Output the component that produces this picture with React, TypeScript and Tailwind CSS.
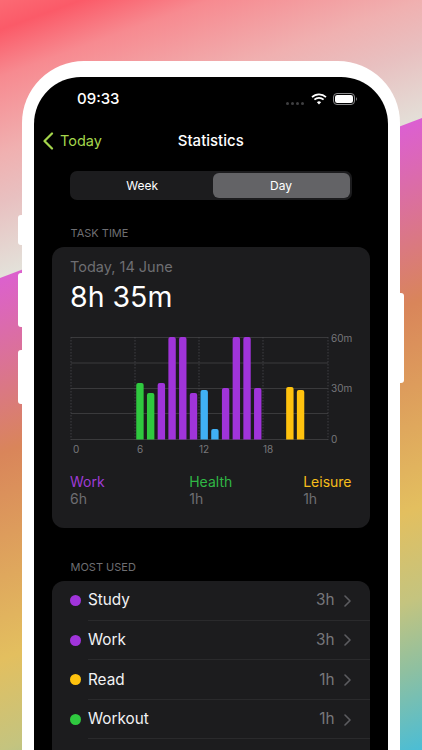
const bars: { hour: number; top: number; color: string }[] = [
  { hour: 6, top: 46, color: "#2fc93f" },
  { hour: 7, top: 56, color: "#2fc93f" },
  { hour: 8, top: 46, color: "#a034da" },
  { hour: 9, top: 0, color: "#a034da" },
  { hour: 10, top: 0, color: "#a034da" },
  { hour: 11, top: 56, color: "#a034da" },
  { hour: 12, top: 53, color: "#40b0f5" },
  { hour: 13, top: 92, color: "#40b0f5" },
  { hour: 14, top: 51, color: "#a034da" },
  { hour: 15, top: 0, color: "#a034da" },
  { hour: 16, top: 0, color: "#a034da" },
  { hour: 17, top: 51, color: "#a034da" },
  { hour: 20, top: 50, color: "#ffc20e" },
  { hour: 21, top: 53, color: "#ffc20e" },
];

const rows = [
  { name: "Study", value: "3h", dot: "bg-[#a034da]" },
  { name: "Work", value: "3h", dot: "bg-[#a034da]" },
  { name: "Read", value: "1h", dot: "bg-[#ffc20e]" },
  { name: "Workout", value: "1h", dot: "bg-[#2fc93f]" },
];

function StatusIcons() {
  return (
    <div className="flex items-center">
      <div className="flex gap-[2px] mt-[8px] mr-[7px]">
        {[0, 1, 2, 3].map((i) => (
          <span key={i} className="w-[3px] h-[3px] rounded-full bg-[#3f3f41]" />
        ))}
      </div>
      <svg width="16" height="12" viewBox="0 0 16 12" className="mr-[6px]" fill="none" stroke="#fff" strokeWidth="1.7">
        <path d="M1 4.2a10 10 0 0 1 14 0" />
        <path d="M3.4 6.7a6.6 6.6 0 0 1 9.2 0" />
        <path d="M8 11.6 5.9 9.3a3 3 0 0 1 4.2 0Z" fill="#fff" stroke="none" />
      </svg>
      <svg width="24" height="12" viewBox="0 0 24 12" fill="none">
        <rect x="0.5" y="0.5" width="21" height="11" rx="3.5" stroke="#8a8a8c" />
        <rect x="2" y="2" width="18" height="8" rx="2.2" fill="#fff" />
        <path d="M23 4.2c.7.3 1 1 1 1.8s-.3 1.500-1 1.800Z" fill="#77777a" />
      </svg>
    </div>
  );
}

function Chart() {
  const step = 257 / 24;
  return (
    <svg width="300" height="128" viewBox="0 0 300 128" className="block overflow-visible font-['Inter',sans-serif]">
      {[0, 25.5, 51, 76, 102].map((y) => (
        <line key={y} x1="0" x2="257" y1={y + 0.5} y2={y + 0.5} stroke="#3a3a3c" strokeWidth="1" />
      ))}
      {[0, 64, 128, 192, 257].map((x) => (
        <line key={x} x1={x} x2={x} y1="0" y2="103" stroke="#4a4a4d" strokeWidth="0.8" strokeDasharray="1.5 1.5" />
      ))}
      {bars.map((b) => (
        <path
          key={b.hour}
          d={`M${b.hour * step + 1} 102.5V${b.top + 2}a2 2 0 0 1 2-2h3.4a2 2 0 0 1 2 2V102.5Z`}
          fill={b.color}
        />
      ))}
      <g fontSize="10" fill="#77777b">
        <text x="260" y="4.5">60m</text>
        <text x="260" y="55">30m</text>
        <text x="260" y="105.5">0</text>
        <text x="2" y="116">0</text>
        <text x="66" y="116">6</text>
        <text x="128" y="116">12</text>
        <text x="192" y="116">18</text>
      </g>
    </svg>
  );
}

export default function App() {
  return (
    <div className="relative w-[422px] h-[750px] overflow-hidden font-['Inter',sans-serif] bg-[linear-gradient(160deg,#dc5fd2_255px,#d9855a_426px,#e3bf5f_620px,#c4c47f_705px,#8fc0a0_770px,#4bbdd5_849px)]">
      {/* top wash, cut along the diagonal */}
      <div className="absolute inset-0 [clip-path:polygon(0_0,100%_0,100%_118px,0_278px)] bg-[linear-gradient(160deg,#fb6a74_0px,#fb5a68_28px,#f78a90_72px,#f0b0b0_144px,#e8c0c0_190px,#e3e2da_262px)]" />

      {/* side buttons */}
      <div className="absolute left-[18px] top-[215px] w-[6px] h-[30px] rounded-l-[3px] bg-white" />
      <div className="absolute left-[18px] top-[273px] w-[6px] h-[54px] rounded-l-[3px] bg-white" />
      <div className="absolute left-[18px] top-[350px] w-[6px] h-[54px] rounded-l-[3px] bg-white" />
      <div className="absolute left-[398px] top-[293px] w-[6px] h-[90px] rounded-r-[3px] bg-white" />

      <div className="relative ml-[22px] mt-[61px] w-[377.5px] h-[689px] flex flex-col bg-white rounded-t-[62px] px-[12px] pt-[16px]">
        <div className="flex-1 flex flex-col min-h-0 bg-black rounded-t-[47px]">
          <div className="h-[44px] shrink-0 flex items-center justify-between pl-[43px] pr-[31px]">
            <span className="mt-[1px] text-[15px] font-medium text-white">09:33</span>
            <StatusIcons />
          </div>

          <div className="relative h-[40px] shrink-0 flex items-center justify-center pt-[1px]">
            <div className="absolute left-[8px] top-[11px] flex items-center text-[#a5d64c]">
              <svg width="12" height="18" viewBox="0 0 12 18" fill="none" stroke="currentColor" strokeWidth="2.2" strokeLinecap="round" strokeLinejoin="round">
                <path d="M10 1.5 2.5 9l7.5 7.5" />
              </svg>
              <span className="ml-[6px] text-[14.5px] leading-[18px]">Today</span>
            </div>
            <span className="text-[15px] font-medium text-white">Statistics</span>
          </div>

          <div className="shrink-0 mt-[10px] mx-[36px] h-[29px] flex p-[2px] bg-[#1c1c1e] rounded-[7px] text-[12px] text-white">
            <div className="flex-1 flex items-center justify-center">Week</div>
            <div className="w-[137px] flex items-center justify-center bg-[#636366] rounded-[6px]">Day</div>
          </div>

          <div className="shrink-0 mt-[26px] ml-[36.5px] h-[14px] flex items-center text-[11px] text-[#6e6e72]">TASK TIME</div>

          <section className="shrink-0 mt-[7px] mx-[18px] h-[281px] bg-[#1c1c1e] rounded-[12px] pt-[11px] px-[18px]">
            <div className="text-[14.5px] leading-[18px] text-[#6e6e72]">Today, 14 June</div>
            <div className="mt-[4px] text-[28.5px] leading-[34px] text-white">8h 35m</div>
            <div className="mt-[23px] ml-[1px]">
              <Chart />
            </div>
            <div className="mt-[8px] grid grid-cols-3 text-[14px] leading-[17px]">
              <div>
                <div className="text-[#9f3bd6]">Work</div>
                <div className="text-[#6e6e72]">6h</div>
              </div>
              <div className="justify-self-center">
                <div className="text-[#30b845]">Health</div>
                <div className="text-[#6e6e72]">1h</div>
              </div>
              <div className="justify-self-end">
                <div className="text-[#f5bd1b]">Leisure</div>
                <div className="text-[#6e6e72]">1h</div>
              </div>
            </div>
          </section>

          <div className="shrink-0 mt-[32px] ml-[36.5px] h-[14px] flex items-center text-[11px] text-[#6e6e72]">MOST USED</div>

          <section className="flex-1 mt-[7px] mx-[18px] bg-[#1c1c1e] rounded-t-[12px]">
            {rows.map((r) => (
              <div key={r.name} className="h-[39.6px] flex items-center pl-[18px]">
                <span className={`w-[11px] h-[11px] rounded-full shrink-0 ${r.dot}`} />
                <div className="ml-[7px] flex-1 self-stretch flex items-center border-b border-[#2a2a2c] pt-[1px] pr-[19px]">
                  <span className="flex-1 text-[15.3px] text-[#f2f2f4]">{r.name}</span>
                  <span className="text-[15.3px] text-[#77777b]">{r.value}</span>
                  <svg width="7" height="12" viewBox="0 0 7 12" className="ml-[9px]" fill="none" stroke="#5c5c60" strokeWidth="1.6" strokeLinecap="round" strokeLinejoin="round">
                    <path d="m1 1 5 5-5 5" />
                  </svg>
                </div>
              </div>
            ))}
          </section>
        </div>
      </div>
    </div>
  );
}
